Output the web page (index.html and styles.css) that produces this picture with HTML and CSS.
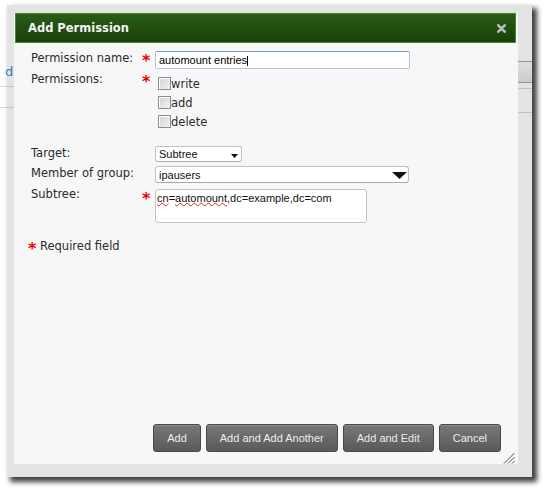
FILE: index.html
```html
<!DOCTYPE html>
<html>
<head>
<meta charset="utf-8">
<link rel="stylesheet" href="styles.css">
</head>
<body>
<div class="page">
  <div class="page-left">
    <a class="nav-link">d</a>
    <div class="rule rule-a"></div>
    <div class="rule rule-b"></div>
  </div>
  <div class="page-right">
    <div class="band"></div>
    <div class="rule rule-c"></div>
    <div class="rule rule-d"></div>
  </div>
</div>

<div class="dialog">
  <div class="dialog-inner">
    <div class="titlebar">
      <span class="title">Add Permission</span>
      <svg class="close" width="9" height="9" viewBox="0 0 9 9"><path d="M1.3 1.3L7.7 7.7M7.7 1.3L1.3 7.7" stroke="#bdbdbd" stroke-width="2.6" stroke-linecap="round"/></svg>
    </div>

    <div class="dialog-body">
      <div class="row">
        <label class="label">Permission name:</label>
        <span class="star">*</span>
        <div class="text-input">automount entries<span class="caret"></span></div>
      </div>

      <div class="row row-perms">
        <label class="label">Permissions:</label>
        <span class="star">*</span>
        <div class="checks">
          <div class="check"><span class="box"></span><span class="check-text">write</span></div>
          <div class="check"><span class="box"></span><span class="check-text">add</span></div>
          <div class="check"><span class="box"></span><span class="check-text">delete</span></div>
        </div>
      </div>

      <div class="row row-target">
        <label class="label">Target:</label>
        <span class="star"></span>
        <div class="select select-small">
          <span>Subtree</span>
          <svg class="arrow-small" width="7" height="4" viewBox="0 0 7 4"><path d="M0 0H7L3.5 4Z" fill="#111"/></svg>
        </div>
      </div>

      <div class="row row-group">
        <label class="label">Member of group:</label>
        <span class="star"></span>
        <div class="select select-wide">
          <span>ipausers</span>
          <svg class="arrow-big" width="15" height="7" viewBox="0 0 15 7"><path d="M0 0H15L7.5 7Z" fill="#111"/></svg>
        </div>
      </div>

      <div class="row row-subtree">
        <label class="label">Subtree:</label>
        <span class="star">*</span>
        <div class="textarea"><span class="misspelled">cn</span>=<span class="misspelled">automount</span>,dc=example,dc=com</div>
      </div>

      <div class="required-note"><span class="star-note">*</span>Required field</div>
    </div>

    <div class="buttons">
      <button class="btn">Add</button>
      <button class="btn">Add and Add Another</button>
      <button class="btn">Add and Edit</button>
      <button class="btn">Cancel</button>
    </div>

    <svg class="resize" width="12" height="12" viewBox="0 0 12 12">
      <path d="M1 11.5L11.5 1M5 11.5L11.5 5M9 11.5L11.5 9" stroke="#555" stroke-width="1"/>
    </svg>
  </div>
</div>
</body>
</html>
```

FILE: styles.css
```css
html, body {
  margin: 0;
  padding: 0;
  background: #ffffff;
}

body {
  width: 547px;
  height: 493px;
  overflow: hidden;
  position: relative;
  font-family: "DejaVu Sans", sans-serif;
}

/* background page (partly visible through the dialog frame) */
.page {
  width: 532px;
  height: 493px;
  display: flex;
  justify-content: space-between;
}

.page-left {
  width: 14px;
  padding-top: 64px;
}

.nav-link {
  display: block;
  padding-left: 5px;
  font-family: "DejaVu Sans", sans-serif;
  font-size: 13px;
  line-height: 16px;
  color: #3f8ad0;
}

.rule {
  height: 1px;
  background: #d9d9d9;
}

.rule-a { margin-top: 6px; }
.rule-b { margin-top: 20px; }

.page-right {
  width: 14px;
  padding-top: 61px;
}

.band {
  height: 20px;
  border-top: 1px solid #a8a8a8;
  border-bottom: 1px solid #a8a8a8;
  background: linear-gradient(#fafafa, #e6e6e6);
}

.rule-c { margin-top: 5px; }
.rule-d { margin-top: 23px; }

/* dialog */
.dialog {
  position: absolute;
  left: 7px;
  top: 5px;
  width: 525px;
  height: 472px;
  box-sizing: border-box;
  padding: 8px 14px 13px 7px;
  background: rgba(0, 0, 0, 0.11);
  box-shadow: 4px 4px 5px 1px rgba(0, 0, 0, 0.75);
}

.dialog-inner {
  position: relative;
  height: 100%;
  background: #f7f7f7;
  display: flex;
  flex-direction: column;
}

.titlebar {
  height: 30px;
  box-sizing: border-box;
  margin: 0 2px 0 1px;
  border: 1px solid #3f8f24;
  background: linear-gradient(#2b5c17, #17400a);
  display: flex;
  align-items: center;
  justify-content: space-between;
  padding: 0 9px 0 12px;
}

.title {
  font-family: "DejaVu Sans", sans-serif;
  font-weight: bold;
  font-size: 11.5px;
  color: #f4f4f4;
}

.close {
  display: block;
  margin-top: 1px;
}

.dialog-body {
  padding: 8px 0 0 17px;
  display: flex;
  flex-direction: column;
}

.row {
  display: grid;
  grid-template-columns: 111px 13px auto;
  align-items: start;
}

.label {
  font-family: "DejaVu Sans", sans-serif;
  font-size: 11.5px;
  line-height: 14px;
  color: #2b2b2b;
}

.star {
  font-family: "DejaVu Sans", sans-serif;
  font-weight: bold;
  font-size: 16px;
  line-height: 14px;
  color: #ee0000;
  padding-top: 3px;
  padding-left: 0;
}

.text-input {
  width: 255px;
  height: 18px;
  box-sizing: border-box;
  border: 1px solid #a9c6e4;
  border-top-color: #7d9dc2;
  border-radius: 2px;
  background: #ffffff;
  padding: 0 3px;
  font-family: "Liberation Sans", sans-serif;
  font-size: 11px;
  line-height: 16px;
  color: #000;
}

.caret {
  display: inline-block;
  width: 0;
  height: 10px;
  border-left: 1px solid #000;
  vertical-align: -2px;
}

.row-perms { margin-top: 3px; }

.checks {
  padding-top: 4px;
  display: flex;
  flex-direction: column;
}

.check {
  height: 19px;
  display: flex;
  align-items: flex-start;
}

.box {
  width: 13px;
  height: 13px;
  box-sizing: border-box;
  margin: 1px 0 0 3px;
  border: 1px solid #8c8c8c;
  background: linear-gradient(135deg, #d2d2d2, #f3f3f3);
  box-shadow: inset 1px 1px 0 #ffffff;
}

.check-text {
  font-family: "DejaVu Sans", sans-serif;
  font-size: 11.5px;
  line-height: 16px;
  color: #2b2b2b;
}

.row-target { margin-top: 13px; }
.row-group { margin-top: 4px; }
.row-subtree { margin-top: 6px; }
.row-subtree .label { margin-top: -2px; }

.select {
  box-sizing: border-box;
  border: 1px solid #c2c2c2;
  border-bottom-color: #aaaaaa;
  border-radius: 3px;
  background: #ffffff;
  display: flex;
  align-items: center;
  justify-content: space-between;
  padding-left: 3px;
  font-family: "Liberation Sans", sans-serif;
  font-size: 11px;
  color: #111;
}

.select-small {
  width: 87px;
  height: 16px;
  padding-right: 3px;
}

.arrow-small {
  display: block;
  margin-top: 3px;
}

.select-wide {
  width: 254px;
  height: 17px;
  padding-right: 1px;
}

.arrow-big {
  display: block;
  margin-top: 1px;
}

.textarea {
  width: 212px;
  height: 34px;
  box-sizing: border-box;
  border: 1px solid #c2c2c2;
  border-radius: 3px;
  background: #ffffff;
  padding: 1px 1px;
  font-family: "Liberation Sans", sans-serif;
  font-size: 11px;
  line-height: 14px;
  color: #111;
}

.misspelled {
  text-decoration: underline wavy #e02020;
  text-decoration-thickness: 1px;
  text-underline-offset: 0;
}

.required-note {
  margin: 16px 0 0 -3px;
  font-family: "DejaVu Sans", sans-serif;
  font-size: 11.5px;
  line-height: 14px;
  color: #2b2b2b;
  display: flex;
}

.star-note {
  width: 12px;
  font-weight: bold;
  font-size: 16px;
  line-height: 14px;
  padding-top: 3px;
  color: #ee0000;
}

.buttons {
  margin-top: auto;
  display: flex;
  justify-content: flex-end;
  gap: 5px;
  padding: 0 17px 12px 0;
}

.btn {
  height: 28px;
  box-sizing: border-box;
  padding: 0 13px;
  border: 1px solid #494949;
  border-radius: 3px;
  background: linear-gradient(#777777, #5a5a5a);
  box-shadow: inset 0 1px 0 rgba(255, 255, 255, 0.15);
  font-family: "Liberation Sans", sans-serif;
  font-size: 11px;
  color: #ececec;
  margin: 0;
}

.resize {
  position: absolute;
  right: 3px;
  bottom: 0;
}
```
